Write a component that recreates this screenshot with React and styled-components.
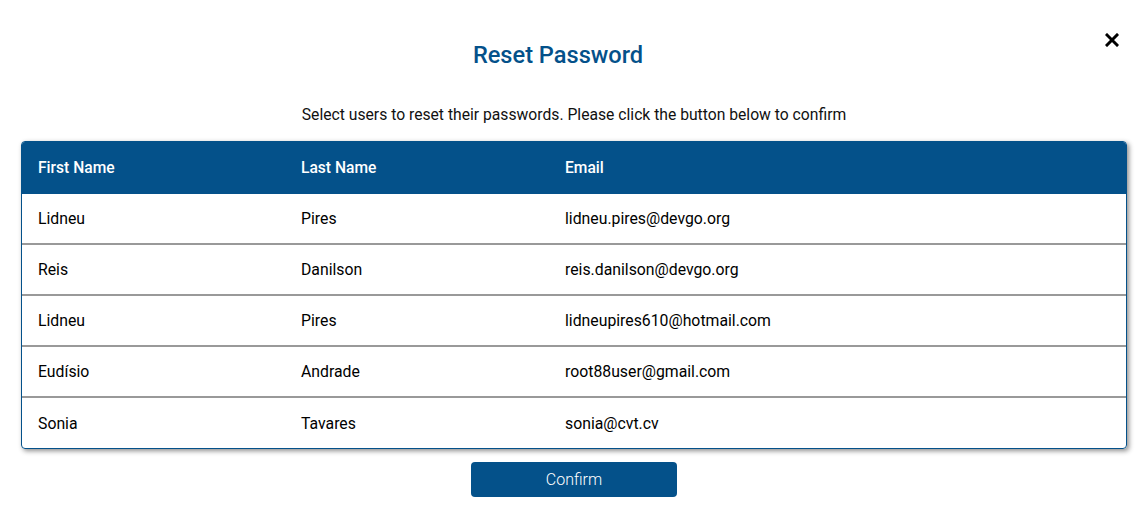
import React from "react"
import styled, { createGlobalStyle } from "styled-components"

const GlobalStyle = createGlobalStyle`
	body {
		margin: 0;
		background: #fff;
		font-family: Roboto, "Noto Sans", sans-serif;
		color: #000;
	}
`

const Modal = styled.div`
	position: relative;
	width: 1147px;
	height: 526px;
	box-sizing: border-box;
	padding: 40px 20px 0 21px;
	display: flex;
	flex-direction: column;
	align-items: center;
`

const CloseButton = styled.button`
	position: absolute;
	top: 32px;
	right: 27px;
	width: 16px;
	height: 16px;
	padding: 0;
	border: none;
	background: none;
	cursor: pointer;
	display: flex;
	align-items: center;
	justify-content: center;
`

const Title = styled.h2`
	margin: 0 32px 0 0;
	font-size: 23.6px;
	line-height: 30px;
	font-weight: 500;
	color: #04518a;
`

const Subtitle = styled.p`
	margin: 35px 0 0;
	font-size: 15.7px;
	line-height: 19px;
	color: #111;
`

const TableWrap = styled.div`
	align-self: stretch;
	margin-top: 17px;
	border: 1px solid #04518a;
	border-radius: 4px;
	overflow: hidden;
	box-shadow: 2px 2px 5px rgba(0, 0, 0, 0.45);
`

const Table = styled.table`
	width: 100%;
	border-collapse: collapse;
	table-layout: fixed;
	font-size: 15.8px;
`

const HeadCell = styled.th`
	box-sizing: border-box;
	background: #04518a;
	color: #fff;
	font-weight: 500;
	font-size: 15.6px;
	text-align: left;
	height: 52px;
	padding: 0 0 0 16px;
	width: ${(p) => p.w || "auto"};
`

const Row = styled.tr`
	border-top: ${(p) => (p.first ? "none" : "2px solid #999")};
`

const Cell = styled.td`
	height: ${(p) => (p.last ? "50px" : "49px")};
	padding: 0 0 0 16px;
	color: #000;
`

const ConfirmButton = styled.button`
	margin-top: 13px;
	width: 206px;
	height: 35px;
	border: none;
	border-radius: 4px;
	background: #04518a;
	color: #fff;
	font-family: Roboto, sans-serif;
	font-weight: 300;
	font-size: 16px;
	cursor: pointer;
`

const users = [
	["Lidneu", "Pires", "lidneu.pires@devgo.org"],
	["Reis", "Danilson", "reis.danilson@devgo.org"],
	["Lidneu", "Pires", "lidneupires610@hotmail.com"],
	["Eudísio", "Andrade", "root88user@gmail.com"],
	["Sonia", "Tavares", "sonia@cvt.cv"],
]

const CloseIcon = () => (
	<svg width="14" height="14" viewBox="0 0 14 14">
		<path d="M2 2 L12 12 M12 2 L2 12" stroke="#000" strokeWidth="3" strokeLinecap="square" />
	</svg>
)

export default function App() {
	return (
		<>
			<GlobalStyle />
			<Modal>
				<CloseButton aria-label="Close">
					<CloseIcon />
				</CloseButton>
				<Title>Reset Password</Title>
				<Subtitle>
					Select users to reset their passwords. Please click the button below to confirm
				</Subtitle>
				<TableWrap>
					<Table>
						<thead>
							<tr>
								<HeadCell w="263px">First Name</HeadCell>
								<HeadCell w="264px">Last Name</HeadCell>
								<HeadCell>Email</HeadCell>
							</tr>
						</thead>
						<tbody>
							{users.map((u, i) => {
								const last = i === users.length - 1
								return (
									<Row key={i} first={i === 0}>
										<Cell last={last}>{u[0]}</Cell>
										<Cell last={last}>{u[1]}</Cell>
										<Cell last={last}>{u[2]}</Cell>
									</Row>
								)
							})}
						</tbody>
					</Table>
				</TableWrap>
				<ConfirmButton>Confirm</ConfirmButton>
			</Modal>
		</>
	)
}
